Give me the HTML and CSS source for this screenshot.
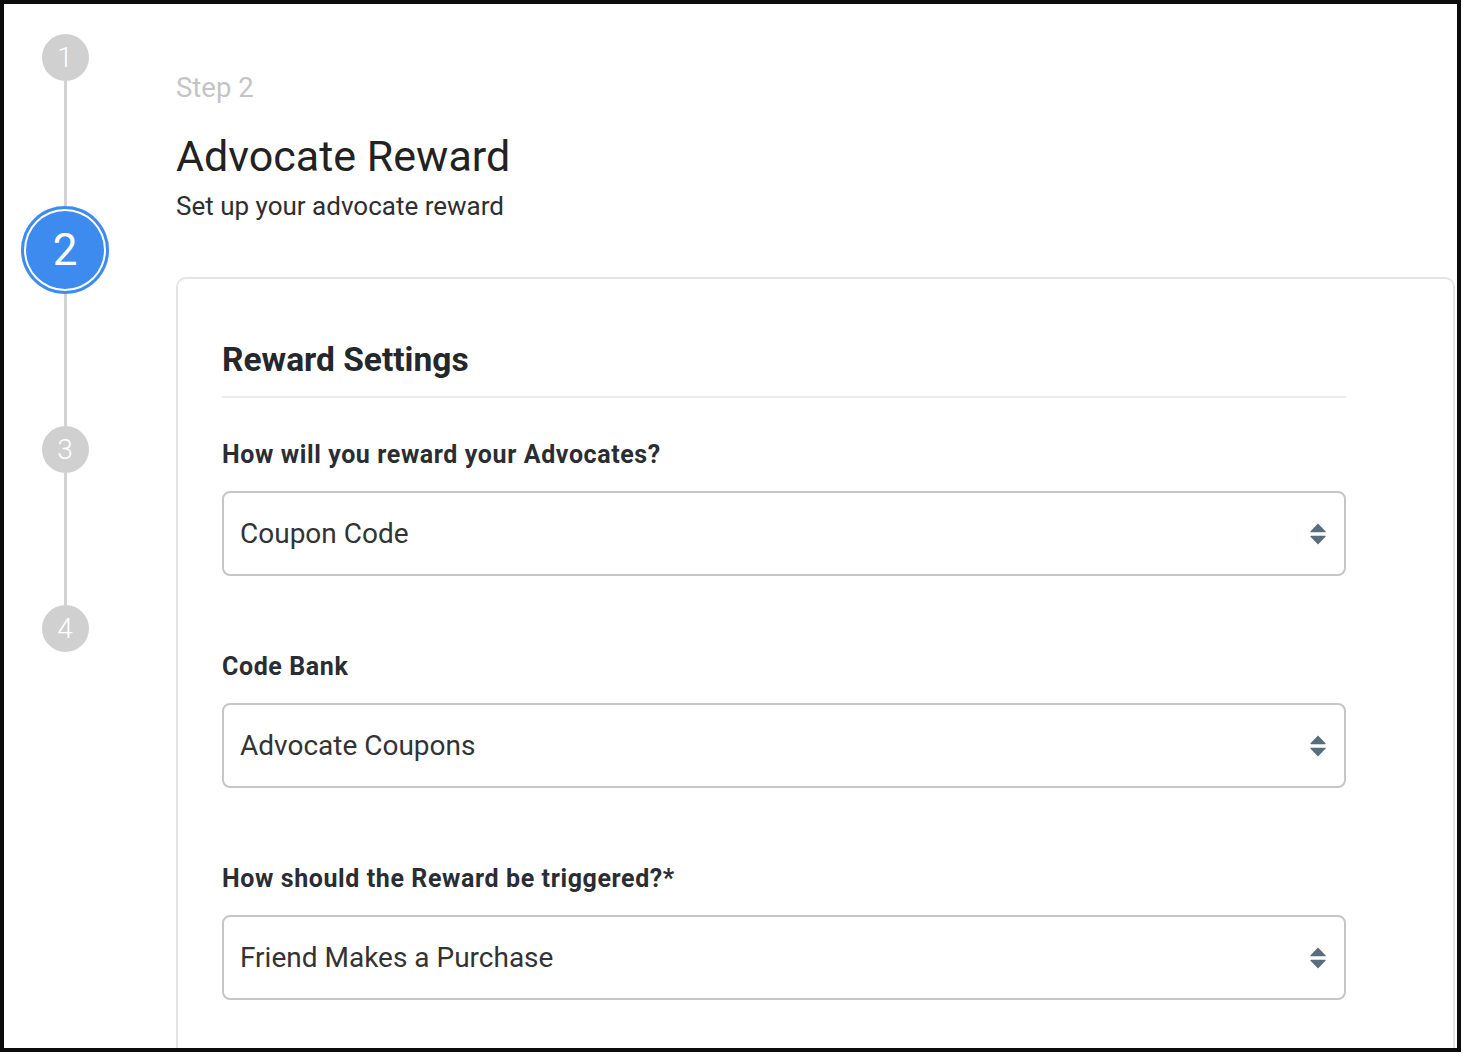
FILE: index.html
```html
<!DOCTYPE html>
<html>
<head>
<meta charset="utf-8">
<link rel="stylesheet" href="styles.css">
</head>
<body>
<div class="frame">
  <aside class="stepper">
    <div class="step done">1</div>
    <div class="connector c1"></div>
    <div class="step active">2</div>
    <div class="connector c2"></div>
    <div class="step">3</div>
    <div class="connector c3"></div>
    <div class="step">4</div>
  </aside>
  <main class="main">
    <div class="step-label">Step 2</div>
    <h1 class="title">Advocate Reward</h1>
    <p class="subtitle">Set up your advocate reward</p>
    <section class="card">
      <h2 class="card-title">Reward Settings</h2>
      <div class="field">
        <label class="field-label">How will you reward your Advocates?</label>
        <div class="select"><span>Coupon Code</span>
          <svg class="arrows" width="18" height="24" viewBox="0 0 18 24"><path d="M9 1.5 L16.5 9.2 Q17 10.3 16 10.3 L2 10.3 Q1 10.3 1.5 9.2 Z" fill="#5a6d7f"/><path d="M9 22.5 L16.5 14.8 Q17 13.7 16 13.7 L2 13.7 Q1 13.7 1.5 14.8 Z" fill="#5a6d7f"/></svg>
        </div>
      </div>
      <div class="field">
        <label class="field-label">Code Bank</label>
        <div class="select"><span>Advocate Coupons</span>
          <svg class="arrows" width="18" height="24" viewBox="0 0 18 24"><path d="M9 1.5 L16.5 9.2 Q17 10.3 16 10.3 L2 10.3 Q1 10.3 1.5 9.2 Z" fill="#5a6d7f"/><path d="M9 22.5 L16.5 14.8 Q17 13.7 16 13.7 L2 13.7 Q1 13.7 1.5 14.8 Z" fill="#5a6d7f"/></svg>
        </div>
      </div>
      <div class="field">
        <label class="field-label">How should the Reward be triggered?*</label>
        <div class="select"><span>Friend Makes a Purchase</span>
          <svg class="arrows" width="18" height="24" viewBox="0 0 18 24"><path d="M9 1.5 L16.5 9.2 Q17 10.3 16 10.3 L2 10.3 Q1 10.3 1.5 9.2 Z" fill="#5a6d7f"/><path d="M9 22.5 L16.5 14.8 Q17 13.7 16 13.7 L2 13.7 Q1 13.7 1.5 14.8 Z" fill="#5a6d7f"/></svg>
        </div>
      </div>
    </section>
  </main>
</div>
</body>
</html>
```
FILE: styles.css
```css
* { box-sizing: border-box; }
html, body { margin: 0; padding: 0; background: #fff; }
body { font-family: Roboto, "Liberation Sans", Arial, sans-serif; }

.frame {
  width: 1461px;
  height: 1052px;
  border: 4px solid #0c0c0c;
  display: flex;
  overflow: hidden;
  background: #fff;
}

.stepper {
  width: 172px;
  flex: none;
  display: flex;
  flex-direction: column;
  align-items: center;
  padding-top: 30px;
  padding-right: 50px;
}
.step {
  width: 47px;
  height: 47px;
  border-radius: 50%;
  background: #d0d0d0;
  color: #fff;
  font-size: 28px;
  font-weight: 300;
  display: flex;
  align-items: center;
  justify-content: center;
  flex: none;
}
.step.active {
  width: 88px;
  height: 88px;
  background: #3d8bef;
  box-shadow: inset 0 0 0 3px #3d8bef, inset 0 0 0 5px #fff;
  font-size: 44px;
  font-weight: 400;
}
.connector { width: 3px; background: #d3d3d3; flex: none; }
.c1 { height: 125px; }
.c2 { height: 132px; }
.c3 { height: 132px; }

.main {
  flex: 1;
  padding-right: 2px;
  padding-top: 68px;
}
.step-label {
  font-size: 27.5px;
  color: #c4c4c4;
  line-height: 32px;
}
.title {
  margin: 27px 0 0;
  font-size: 43px;
  font-weight: 400;
  color: #222;
  line-height: 50px;
}
.subtitle {
  margin: 9px 0 0;
  font-size: 26px;
  color: #2e2e2e;
  line-height: 32px;
}
.card {
  margin-top: 55px;
  border: 2px solid #e4e4e4;
  border-bottom: none;
  border-radius: 10px 10px 0 0;
  padding: 61px 107px 60px 44px;
  height: 900px;
}
.card-title {
  margin: 0;
  font-size: 33.5px;
  font-weight: 700;
  color: #24272c;
  line-height: 40px;
  padding-bottom: 16px;
  border-bottom: 2px solid #ececec;
}
.field { margin-top: 42px; }
.field + .field { margin-top: 76px; }
.field-label {
  display: block;
  font-size: 25px;
  letter-spacing: 0.6px;
  font-weight: 700;
  color: #2a2d32;
  line-height: 30px;
}
.select {
  margin-top: 21px;
  height: 85px;
  border: 2px solid #c6c6c6;
  border-radius: 8px;
  display: flex;
  align-items: center;
  justify-content: space-between;
  padding: 0 17px 0 16px;
  font-size: 28px;
  color: #333;
}
.arrows { display: block; }
```
